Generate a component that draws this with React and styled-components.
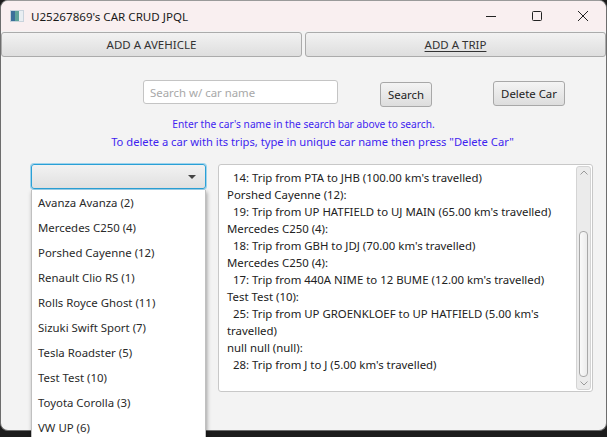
import React from 'react';
import styled, { createGlobalStyle } from 'styled-components';

const GlobalStyle = createGlobalStyle`
  html, body {
    margin: 0;
    padding: 0;
    background: #1c1c1c;
  }
  body {
    font-family: "Noto Sans", "Open Sans", sans-serif;
    width: 607px;
    height: 437px;
    overflow: hidden;
  }
`;

const Desktop = styled.div`
  position: relative;
  width: 607px;
  height: 437px;
  background: #1c1c1c;
  overflow: hidden;
`;

const Window = styled.div`
  position: relative;
  width: 605px;
  height: 429px;
  background: #f3f3f3;
  border: 1px solid #6d6d6d;
  border-top-color: #9a9a9a;
  border-radius: 8px;
  overflow: hidden;
  display: flex;
  flex-direction: column;
`;

const TitleBar = styled.div`
  height: 30px;
  flex: none;
  background: #f9eff0;
  display: flex;
  align-items: center;
  padding-left: 9px;
  font-size: 11.6px;
  color: #1a1a1a;
`;

const TitleText = styled.span`
  margin-left: 7px;
  flex: 1;
`;

const Controls = styled.div`
  display: flex;
  align-items: center;
`;

const ControlBtn = styled.div`
  width: 46px;
  height: 30px;
  display: flex;
  align-items: center;
  justify-content: center;
  color: #222;
`;

const TabRow = styled.div`
  display: flex;
  gap: 3px;
  padding: 1px 0 0 0;
  flex: none;
`;

const TabButton = styled.div`
  flex: 1;
  height: 23px;
  border: 1px solid #ababab;
  border-radius: 3px;
  background: linear-gradient(#f2f2f2, #dedede);
  display: flex;
  align-items: center;
  justify-content: center;
  font-size: 11.5px;
  color: #333;
  text-decoration: ${p => (p.$underline ? 'underline' : 'none')};
  text-underline-offset: 2px;
`;

const Content = styled.div`
  flex: 1;
  display: flex;
  flex-direction: column;
  position: relative;
`;

const SearchRow = styled.div`
  display: flex;
  align-items: flex-start;
  padding: 23px 0 0 142px;
  height: 27px;
`;

const SearchInput = styled.div`
  height: 22px;
  width: 187px;
  background: #fff;
  border: 1px solid #c4c4c4;
  border-radius: 3px;
  display: flex;
  align-items: center;
  padding-left: 6px;
  font-size: 11.4px;
  color: #a8a8a8;
`;

const Button = styled.div`
  margin-top: ${p => p.$top}px;
  margin-left: ${p => p.$left}px;
  height: 23px;
  padding: 0 7px;
  border: 1px solid #a8a8a8;
  border-radius: 3px;
  background: linear-gradient(#f4f4f4, #dddddd);
  display: flex;
  align-items: center;
  font-size: 11.4px;
  color: #222;
`;

const Hints = styled.div`
  margin-top: 9px;
  display: flex;
  flex-direction: column;
  align-items: center;
  color: #3f1ff0;
  line-height: 17px;
`;

const Hint = styled.div`
  font-size: ${p => p.$size}px;
  padding-left: ${p => p.$shift || 0}px;
`;

const MainRow = styled.div`
  display: flex;
  align-items: flex-start;
  padding: 14px 0 0 30px;
  gap: 12px;
`;

const LeftColumn = styled.div`
  width: 175px;
  display: flex;
  flex-direction: column;
`;

const Combo = styled.div`
  height: 23px;
  border: 1px solid #2aa0d6;
  box-shadow: 0 0 0 1px #9fd3ec;
  border-radius: 3px;
  background: linear-gradient(#f2f2f2, #e0e0e0);
  display: flex;
  align-items: center;
  justify-content: flex-end;
  padding-right: 9px;
`;

const Arrow = styled.div`
  width: 0;
  height: 0;
  border-left: 4px solid transparent;
  border-right: 4px solid transparent;
  border-top: 4px solid #444;
`;

const SideButton = styled.div`
  margin-top: ${p => p.$top}px;
  height: ${p => p.$h}px;
  border: 1px solid #b0b0b0;
  border-radius: 3px;
  background: linear-gradient(#f2f2f2, #dedede);
`;

const TextArea = styled.div`
  width: 373px;
  height: 226px;
  border: 1px solid #c8c8c8;
  border-radius: 3px;
  background: #fff;
  display: flex;
  overflow: hidden;
`;

const TextBody = styled.div`
  flex: 1;
  overflow: hidden;
  margin: 3px 0 3px 0;
  padding-left: 8px;
`;

const Lines = styled.pre`
  margin: -16px 0 0 0;
  font-family: "Noto Sans", "Open Sans", sans-serif;
  font-size: 11.4px;
  line-height: 17px;
  color: #222;
  white-space: pre;
`;

const ScrollTrack = styled.div`
  width: 13px;
  margin: 1px 1px 1px 0;
  border: 1px solid #d4d4d4;
  border-radius: 3px;
  background: #ebebeb;
  display: flex;
  flex-direction: column;
  align-items: center;
  justify-content: space-between;
  padding: 3px 0;
`;

const Thumb = styled.div`
  width: 9px;
  height: 146px;
  margin-top: auto;
  margin-bottom: 4px;
  border: 1px solid #a8a8a8;
  border-radius: 4px;
  background: linear-gradient(90deg, #fafafa, #ececec);
  box-sizing: border-box;
`;

const Popup = styled.div`
  position: absolute;
  left: 31px;
  top: 190px;
  width: 173px;
  background: #fff;
  border: 1px solid #c0c0c0;
  border-top: none;
  box-shadow: 1px 2px 4px rgba(0, 0, 0, 0.35);
  z-index: 5;
`;

const Item = styled.div`
  height: 25px;
  line-height: 26px;
  padding-left: 6px;
  font-size: 11.4px;
  color: #2a2a2a;
`;

const cars = [
  'Avanza Avanza (2)',
  'Mercedes C250 (4)',
  'Porshed Cayenne (12)',
  'Renault Clio RS (1)',
  'Rolls Royce Ghost (11)',
  'Sizuki Swift Sport (7)',
  'Tesla Roadster (5)',
  'Test Test (10)',
  'Toyota Corolla (3)',
  'VW UP (6)',
];

const tripText = [
  'Rolls Royce Ghost (11):',
  '  14: Trip from PTA to JHB (100.00 km\'s travelled)',
  'Porshed Cayenne (12):',
  '  19: Trip from UP HATFIELD to UJ MAIN (65.00 km\'s travelled)',
  'Mercedes C250 (4):',
  '  18: Trip from GBH to JDJ (70.00 km\'s travelled)',
  'Mercedes C250 (4):',
  '  17: Trip from 440A NIME to 12 BUME (12.00 km\'s travelled)',
  'Test Test (10):',
  '  25: Trip from UP GROENKLOEF to UP HATFIELD (5.00 km\'s',
  'travelled)',
  'null null (null):',
  '  28: Trip from J to J (5.00 km\'s travelled)',
].join('\n');

const AppIcon = () => (
  <svg width="14" height="12" viewBox="0 0 14 12">
    <rect x="0" y="0" width="14" height="12" fill="#c9d3dc" />
    <rect x="1" y="1" width="4" height="10" fill="#3b6f9a" />
    <rect x="5" y="1" width="4" height="10" fill="#5fa39a" />
    <rect x="9" y="1" width="4" height="10" fill="#e9eef2" />
  </svg>
);

export default function App() {
  return (
    <Desktop>
      <GlobalStyle />
      <Window>
        <TitleBar>
          <AppIcon />
          <TitleText>U25267869's CAR CRUD JPQL</TitleText>
          <Controls>
            <ControlBtn>
              <svg width="12" height="12" viewBox="0 0 12 12">
                <path d="M1 6.5h10" stroke="#222" strokeWidth="1" />
              </svg>
            </ControlBtn>
            <ControlBtn>
              <svg width="12" height="12" viewBox="0 0 12 12">
                <rect x="1.5" y="1.5" width="9" height="9" rx="1" fill="none" stroke="#222" strokeWidth="1" />
              </svg>
            </ControlBtn>
            <ControlBtn>
              <svg width="12" height="12" viewBox="0 0 12 12">
                <path d="M1 1l10 10M11 1L1 11" stroke="#222" strokeWidth="1" />
              </svg>
            </ControlBtn>
          </Controls>
        </TitleBar>
        <TabRow>
          <TabButton>ADD A AVEHICLE</TabButton>
          <TabButton $underline>ADD A TRIP</TabButton>
        </TabRow>
        <Content>
          <SearchRow>
            <SearchInput>Search w/ car name</SearchInput>
            <Button $top={2} $left={42}>Search</Button>
            <Button $top={1} $left={61}>Delete Car</Button>
          </SearchRow>
          <Hints>
            <Hint $size={10.2}>Enter the car's name in the search bar above to search.</Hint>
            <Hint $size={11.2} $shift={18}>To delete a car with its trips, type in unique car name then press "Delete Car"</Hint>
          </Hints>
          <MainRow>
            <LeftColumn>
              <Combo>
                <Arrow />
              </Combo>
              <SideButton $top={13} $h={28} />
              <SideButton $top={60} $h={28} />
              <SideButton $top={14} $h={24} />
            </LeftColumn>
            <TextArea>
              <TextBody>
                <Lines>{tripText}</Lines>
              </TextBody>
              <ScrollTrack>
                <svg width="8" height="5" viewBox="0 0 8 5">
                  <path d="M0.5 4.5L4 1l3.5 3.5" fill="none" stroke="#9a9a9a" strokeWidth="1" />
                </svg>
                <Thumb />
                <svg width="8" height="5" viewBox="0 0 8 5">
                  <path d="M0.5 0.5L4 4l3.5-3.5" fill="none" stroke="#9a9a9a" strokeWidth="1" />
                </svg>
              </ScrollTrack>
            </TextArea>
          </MainRow>
        </Content>
      </Window>
      <Popup>
        {cars.map(c => (
          <Item key={c}>{c}</Item>
        ))}
      </Popup>
    </Desktop>
  );
}
